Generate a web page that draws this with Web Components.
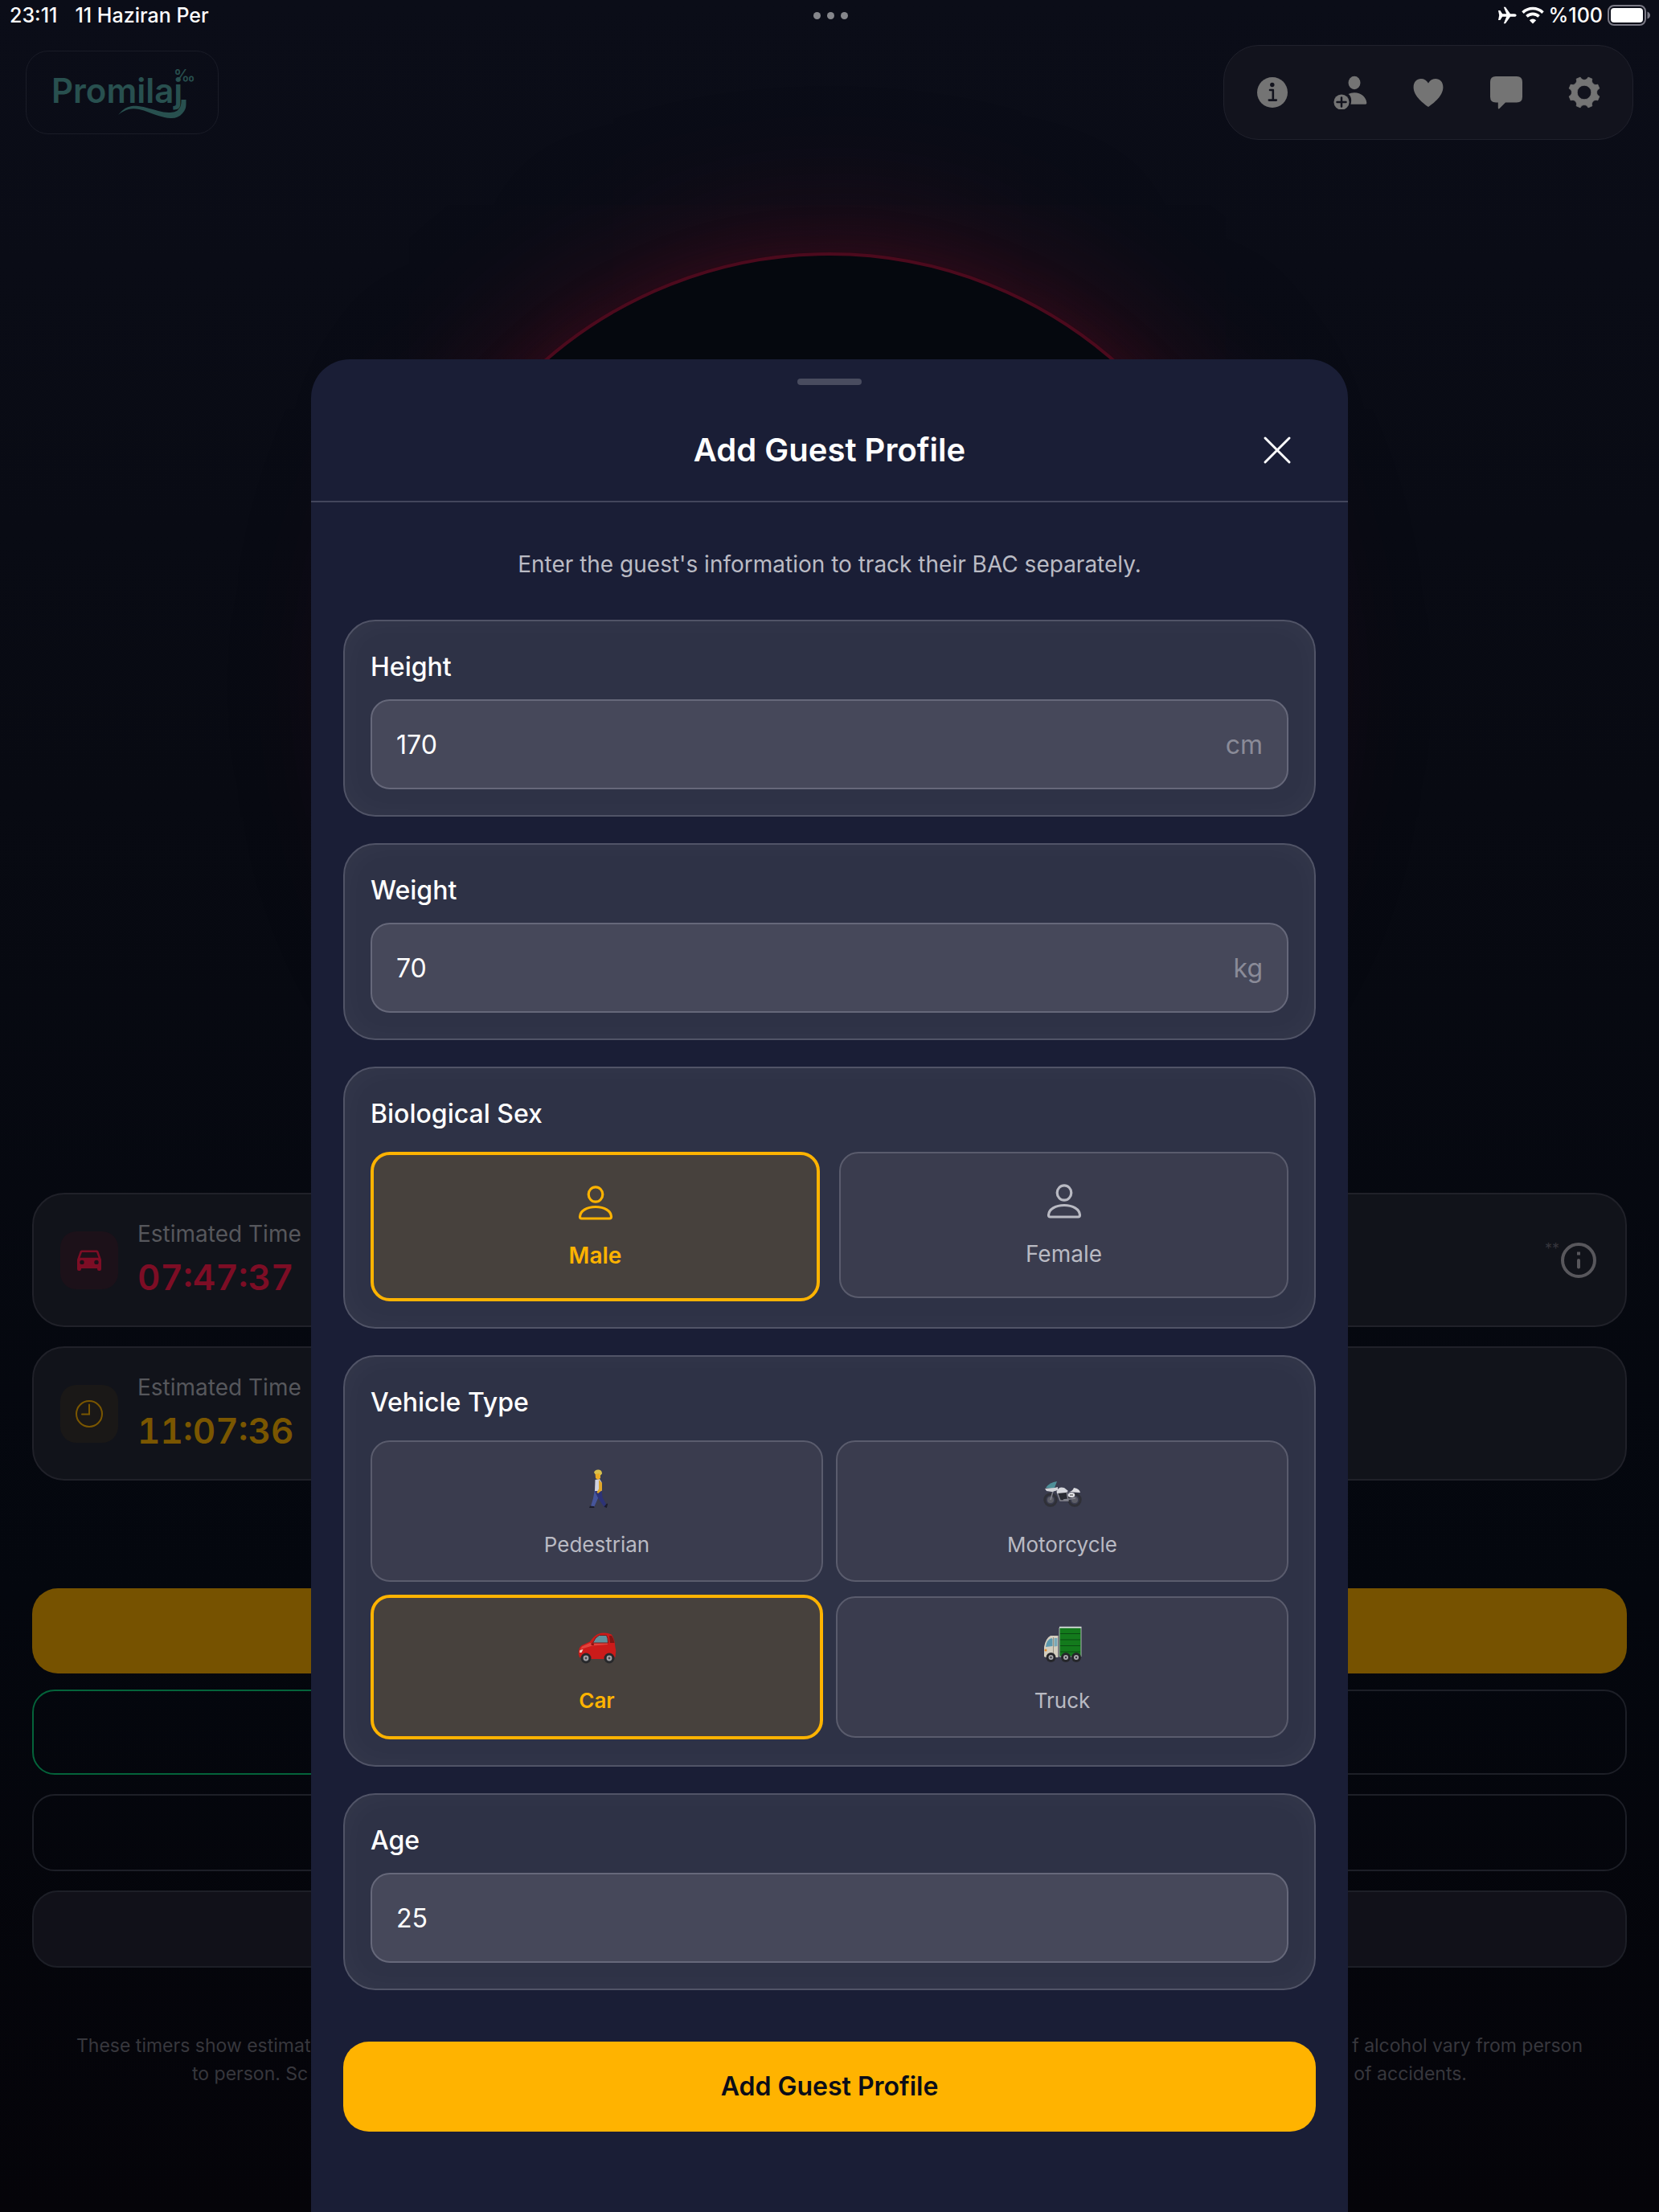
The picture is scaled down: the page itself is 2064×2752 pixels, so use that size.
<!DOCTYPE html>
<html lang="en">
<head>
<meta charset="utf-8">
<meta name="viewport" content="width=device-width, initial-scale=1">
<title>Promilaj</title>
<style>
    html, body {
        margin: 0;
        min-height: 100%;
    }

    body {
        min-height: 100vh;
        background: linear-gradient(#0b0d18 0, #080a12 36%, #04070e 72%, #050409 100%);
        color: white;
        font-family: Inter, "Liberation Sans", sans-serif;
        --amber: #ffb300;
    }
</style>
</head>
<body>
<promilaj-app></promilaj-app>

<script>
const icons = {
    plane: '<svg width="24" height="22" viewBox="0 0 24 22" fill="#fff"><path d="M1 5h2.400l2.800 4.200h5L7.800.8h2.200l6 8.400H21c1.600 0 2.700 1 2.700 1.800s-1.100 1.800-2.700 1.800h-5l-6 8.400H7.800l3.400-8.400h-5L3.400 17H1l1.200-6z"/></svg>',
    wifi: '<svg width="28" height="22" viewBox="0 0 28 22" fill="none" stroke="#fff" stroke-width="3.600"><path d="M1.500 7.600a18 18 0 0 1 25 0"/><path d="M6.400 12.400a11 11 0 0 1 15.200 0"/><path d="M14 21.500l-4.200-4.300a6 6 0 0 1 8.400 0z" fill="#fff" stroke="none"/></svg>',
    battery: '<svg width="54" height="26" viewBox="0 0 54 26"><rect x="1" y="1" width="46" height="24" rx="7" fill="none" stroke="#7b7a86" stroke-width="2"/><rect x="4" y="4" width="40" height="18" rx="4" fill="#fff"/><path d="M49.500 8.500q3.500 1.500 3.500 4.500t-3.500 4.500z" fill="#7b7a86"/></svg>',
    info: '<svg width="40" height="40" viewBox="0 0 40 40"><circle cx="20" cy="20" r="19" fill="#747474"/><circle cx="19.800" cy="10.500" r="2.700" fill="#12131d"/><path d="M17 17h3.800v12.300M15.800 29.600h9" fill="none" stroke="#12131d" stroke-width="2.600" stroke-linecap="round" stroke-linejoin="round"/></svg>',
    addUser: '<svg width="42" height="42" viewBox="0 0 42 42"><ellipse cx="26" cy="9" rx="7.500" ry="8.300" fill="#747474"/><path d="M18.500 23q3-1.700 7.500-1.700c8.500 0 15 6 15.300 12.700 0 1-.5 1.700-1.500 1.700H21.500c1.500-5.500.5-10-3-12.700z" fill="#747474"/><circle cx="10" cy="33" r="9.600" fill="#747474"/><path d="M10 27.500v11M4.500 33h11" stroke="#12131d" stroke-width="2.500" stroke-linecap="round"/></svg>',
    heart: '<svg width="40" height="40" viewBox="0 0 40 40"><path d="M20 38C15 34.500 1.600 25 1.600 13.500 1.600 6.500 6 3 10.800 3 15 3 18 5 20 8.500 22 5 25 3 29.200 3 34 3 38.400 6.500 38.400 13.500 38.400 25 25 34.500 20 38z" fill="#747474"/></svg>',
    chat: '<svg width="42" height="42" viewBox="0 0 42 42"><path d="M8 1h26q7 0 7 7v18.500q0 7-7 7H20L12.500 41q-1.700 1.300-1.700-.8v-6.700H8q-7 0-7-7V8q0-7 7-7z" fill="#747474"/></svg>',
    gear: '<svg width="40" height="40" viewBox="0 0 40 40"><path fill="#747474" stroke="#747474" stroke-width=".8" stroke-linejoin="round" fill-rule="evenodd" d="M15.100 1.100C17 5.500 23 5.500 24.900 1.100L29.900 3.200C28.100 7.600 32.400 11.900 36.800 10.100L38.900 15.100C34.500 17 34.500 23 38.900 24.900L36.800 29.900C32.400 28.100 28.100 32.400 29.900 36.800L24.900 38.900C23 34.500 17 34.500 15.100 38.900L10.100 36.800C11.900 32.400 7.600 28.100 3.200 29.900L1.100 24.900C5.500 23 5.500 17 1.100 15.100L3.200 10.100C7.600 11.900 11.900 7.600 10.100 3.200zM20 11.200a8.800 8.800 0 1 0 0 17.600 8.800 8.800 0 1 0 0-17.600z"/></svg>',
    carFront: '<svg width="32" height="28" viewBox="0 0 32 28"><path fill="#7d0d25" fill-rule="evenodd" d="M6.500 1.500h19q1.500 0 2 1.500L31 13v12q0 2-2 2h-1q-2 0-2-2v-1H6v1q0 2-2 2H3q-2 0-2-2V13L4.500 3q.5-1.500 2-1.500zM7 4L4.500 10.800h23L25 4zM7 13.700a2.700 2.700 0 1 0 0 5.400 2.700 2.700 0 1 0 0-5.400zm18 0a2.700 2.700 0 1 0 0 5.400 2.700 2.700 0 1 0 0-5.400z"/></svg>',
    clock: '<svg width="36" height="36" viewBox="0 0 36 36" fill="none" stroke="#7a5600" stroke-width="2"><circle cx="18" cy="18" r="16"/><path d="M18 6.500v12H9" stroke-linecap="round"/></svg>',
    infoOutline: '<svg width="48" height="48" viewBox="0 0 48 48" fill="none" stroke="#58575c" stroke-width="4"><circle cx="24" cy="24" r="20"/><path d="M24 24v8.500" stroke-linecap="round"/><path d="M24 13.500v4"/></svg>',
    close: '<svg width="56" height="56" viewBox="0 0 56 56"><path d="M13 13l30 30M43 13L13 43" stroke="#fff" stroke-width="3" stroke-linecap="round"/></svg>',
    person: '<svg width="56" height="56" viewBox="0 0 56 56" fill="none" stroke="currentColor" stroke-width="3.200"><ellipse cx="28" cy="17" rx="8.800" ry="9.200"/><path d="M10.500 47q-2 0-2-2.500C9 37.500 17 32.500 28 32.500s19 5 19.500 12q0 2.500-2 2.500z"/></svg>',
    walk: '<svg width="48" height="48" viewBox="0 0 48 48"><path d="M21 25l-2 11-3 10h4.500l4.500-10 3-10z" fill="#46559a"/><path d="M22 25l7.500 1 1 9 5.500 10-3 2.500-7.500-11-4-8z" fill="#2d3377"/><path d="M15 45.500l5 .5.500 2H14zM32.500 46.500l3.500-4 1.200.5-1.400 5z" fill="#1c1d2c"/><path d="M21.500 13l5.500-1 2.500 4v11h-8.500z" fill="#cfd2e0"/><path d="M26 13l4 4v9l-5 4-1.500-1.500 2.500-4z" fill="#dfa628"/><path d="M21.500 5H28v6l-3 2-3-2z" fill="#e8ab25"/><path d="M20 4q1-4 6-3.500 4 .500 4 5L27.500 8l-1-3-5 1z" fill="#d8c04c"/></svg>',
    motorcycle: '<svg width="48" height="48" viewBox="0 0 48 48"><g fill="none" stroke="#2f3037" stroke-width="3"><circle cx="9" cy="38" r="7.200"/><circle cx="39" cy="38" r="7.200"/></g><g fill="#5c5d66"><circle cx="9" cy="38" r="4"/><circle cx="39" cy="38" r="4"/></g><path d="M9 38l4-14M17 28l4 11h10l-2-12zM25 38l15-2" fill="#292b32" stroke="#82838d" stroke-width="1.500"/><path d="M17 27q2-6 9-4l5 4-3 2-11 1z" fill="#d5d6dc"/><path d="M29 28q7 1 9-5 7 1 8 6z" fill="#dcdce0"/><path d="M3 23q5-7 14-8l-3 8-3 1z" fill="#4e8f98"/><path d="M2 24l12-1 4-1v4l-7 2-7-1z" fill="#d2d3d8"/><ellipse cx="35" cy="32" rx="4.300" ry="3" fill="#e2e2e6"/><path d="M33 32h4" stroke="#555" stroke-width="1.200"/></svg>',
    car: '<svg width="48" height="48" viewBox="0 0 48 48"><path d="M.8 36q-.5-8 4-11l10-4.500q5-7 10-9.500 9-3 17 .5 4 5 4.700 16l.8 4-.8 8-3.500 2.500H7l-5-2z" fill="#cb1b1a"/><path d="M5 26.500l10-4.500h22v2L18 25.500 3 30z" fill="#e2433c"/><path d="M18.500 22q3-7.500 8-9.500h9q2 3 2 9.500z" fill="#5e919d" stroke="#7d1714" stroke-width="1"/><path d="M39 13h3q3 4 3.500 9H40z" fill="#7f1513"/><path d="M16 22.500l3.500-.5.500 3h-3z" fill="#8c1211"/><path d="M2.500 31l4-1-2 4H2z" fill="#f1d9c9"/><g fill="#27282b"><circle cx="10" cy="41" r="6.500"/><circle cx="39" cy="41" r="6.500"/></g><g fill="#a2a2a6"><circle cx="10" cy="41" r="3.400"/><circle cx="39" cy="41" r="3.400"/></g><g fill="#4a4a4e"><circle cx="10" cy="41" r="1.400"/><circle cx="39" cy="41" r="1.400"/></g></svg>',
    truck: '<svg width="48" height="48" viewBox="0 0 48 48"><path d="M20 3h27v36H20z" fill="#137a1c" stroke="#a8b2ad" stroke-width="1"/><path d="M21 10.500h25M21 18h25M21 25.500h25M21 33h25" stroke="#0a4a12" stroke-width="1.200"/><path d="M20 2.500h27.500" stroke="#dfe4e2" stroke-width="1.500"/><path d="M1 39V27q2-11 8-14h9.500v27H3z" fill="#d3cebf"/><path d="M3 27q1-9 7-11l1.500 1v9z" fill="#5b98ae"/><path d="M13.500 16h4v10l-4 .5z" fill="#79a9b8"/><path d="M12.500 15v24" stroke="#948f82"/><circle cx="3" cy="31" r="1.500" fill="#e08b2a"/><g fill="#25262a"><circle cx="9.500" cy="40" r="6"/><circle cx="28" cy="40" r="6"/><circle cx="41" cy="40" r="6"/></g><g fill="#a9a9ae"><circle cx="9.500" cy="40" r="3"/><circle cx="28" cy="40" r="3"/><circle cx="41" cy="40" r="3"/></g><g fill="#3d3d42"><circle cx="9.500" cy="40" r="1.200"/><circle cx="28" cy="40" r="1.200"/><circle cx="41" cy="40" r="1.200"/></g></svg>',
    logo: '<svg width="182" height="74" viewBox="0 0 182 74" fill="#28504f" role="img" aria-label="Promilaj"><text x="3" y="50" font-size="42" font-weight="600">Promilaj</text><text x="155" y="23" font-size="20" font-weight="500">‰</text><path d="M86 65C91 59 95 56 99 55C103 53.500 107 53.500 111 54C120 55 128 58 136 60C140 61 145 62 149 62C154 62 159 61 161 58C164 55 164.500 52 164.500 46H170.500V51C170.500 56 169.500 59 166 63C162 67.500 157 69.500 151 69C146 69 141 67.500 136 66C128 63.500 120 59.500 112 58C107 57 103 57 99 58C95 59 91 61 86 65z"/></svg>',
};

class BaseElement extends HTMLElement {
    constructor() {
        super();
        this.attachShadow({ mode: 'open' });
    }

    connectedCallback() {
        this.shadowRoot.innerHTML = this.render();
    }
}

class StatusBar extends BaseElement {
    render() {
        return `
        <style>
            :host {
                display: grid;
                grid-template-columns: 1fr auto 1fr;
                align-items: center;
                height: 38px;
                padding: 0 10px 0 12px;
                font-size: 25px;
                font-weight: 500;
            }
            .left { display: flex; gap: 22px; }
            .dots { display: flex; gap: 8px; }
            .dots i {
                width: 9px;
                height: 9px;
                border-radius: 50%;
                background: #85868b;
            }
            .right {
                display: flex;
                justify-content: flex-end;
                align-items: center;
                gap: 6px;
            }
            svg { display: block; }
        </style>
        <div class="left"><span>23:11</span><span>11 Haziran Per</span></div>
        <div class="dots"><i></i><i></i><i></i></div>
        <div class="right">${icons.plane}${icons.wifi}<span>%100</span>${icons.battery}</div>`;
    }
}
customElements.define('status-bar', StatusBar);

class TopBar extends BaseElement {
    render() {
        const buttons = [
            ['info', 'About'],
            ['addUser', 'Add guest'],
            ['heart', 'Favourites'],
            ['chat', 'Feedback'],
            ['gear', 'Settings'],
        ];
        return `
        <style>
            :host {
                display: flex;
                justify-content: space-between;
                align-items: center;
                padding: 18px 32px 0;
            }
            .logo {
                padding: 14px 28px;
                border: 1px solid #1a1c27;
                border-radius: 28px;
            }
            .tools {
                display: flex;
                gap: 1px;
                padding: 10px 12px;
                border: 1px solid #20212c;
                border-radius: 44px;
                background: #12131d;
            }
            button {
                display: flex;
                align-items: center;
                justify-content: center;
                width: 96px;
                height: 96px;
                padding: 0;
                border: 0;
                background: none;
            }
            svg { display: block; }
        </style>
        <div class="logo">${icons.logo}</div>
        <div class="tools">
            ${buttons.map(([icon, label]) => `<button aria-label="${label}">${icons[icon]}</button>`).join('')}
        </div>`;
    }
}
customElements.define('top-bar', TopBar);

class BacGauge extends BaseElement {
    render() {
        return `
        <style>
            :host {
                display: flex;
                justify-content: center;
                padding: 140px 0 90px;
            }
            .ring {
                box-sizing: border-box;
                width: 1080px;
                height: 1080px;
                border: 4px solid #4c0a1d;
                border-radius: 50%;
                background: #05080e;
                box-shadow: 0 0 60px rgba(90, 12, 30, .2), 0 0 160px 20px rgba(90, 12, 30, .5);
            }
        </style>
        <div class="ring"></div>`;
    }
}
customElements.define('bac-gauge', BacGauge);

class TimerCard extends BaseElement {
    render() {
        return `
        <style>
            :host {
                display: flex;
                align-items: center;
                gap: 24px;
                box-sizing: border-box;
                height: 167px;
                padding: 0 34px 0 33px;
                border: 2px solid #202129;
                border-radius: 40px;
                background: #11131a;
            }
            .icon {
                display: flex;
                align-items: center;
                justify-content: center;
                width: 72px;
                height: 72px;
                border-radius: 20px;
                background: #1c1119;
            }
            :host([tone=amber]) .icon { background: #1a1817; }
            .text { flex: 1; }
            .title {
                font-size: 28px;
                line-height: 42px;
                color: #56575c;
            }
            .time {
                font-size: 44px;
                line-height: 66px;
                font-weight: 600;
                font-variant-numeric: tabular-nums;
                color: #7d0d25;
            }
            :host([tone=amber]) .time { color: #7a5600; }
            svg { display: block; }
        </style>
        <div class="icon">${icons[this.getAttribute('icon')]}</div>
        <div class="text">
            <div class="title">${this.getAttribute('label')}</div>
            <div class="time">${this.getAttribute('time')}</div>
        </div>
        <slot></slot>`;
    }
}
customElements.define('timer-card', TimerCard);

class InfoNote extends BaseElement {
    render() {
        return `
        <style>
            :host { display: flex; }
            span {
                font-size: 18px;
                line-height: 20px;
                color: #35353c;
            }
            button {
                padding: 0;
                border: 0;
                background: none;
            }
            svg { display: block; }
        </style>
        <span>**</span>
        <button aria-label="More about this timer">${icons.infoOutline}</button>`;
    }
}
customElements.define('info-note', InfoNote);

class HomeActions extends BaseElement {
    render() {
        return `
        <style>
            :host {
                display: flex;
                flex-direction: column;
                gap: 24px;
            }
            .main {
                display: grid;
                grid-template-columns: 1fr 1fr;
                gap: 20px;
            }
            button {
                height: 96px;
                border: 2px solid #1d1f27;
                border-radius: 28px;
                background: none;
            }
            .main button { height: 106px; }
            .main .add {
                grid-column: span 2;
                border: 0;
                border-radius: 32px;
                background: #765200;
            }
            .main .water { border-color: #04633a; }
            .filled {
                border-radius: 32px;
                background: #111119;
            }
        </style>
        <div class="main">
            <button class="add" aria-label="Add drink"></button>
            <button class="water" aria-label="Water"></button>
            <button aria-label="Food"></button>
        </div>
        <button aria-label="History"></button>
        <button class="filled" aria-label="Reset"></button>`;
    }
}
customElements.define('home-actions', HomeActions);

class HomeNote extends BaseElement {
    render() {
        return `
        <style>
            :host {
                display: block;
                font-size: 23px;
                line-height: 35px;
                color: #37373d;
            }
            div {
                display: flex;
                justify-content: space-between;
                padding: 0 55px;
            }
            div + div { padding: 0 199px; }
        </style>
        <div><span>These timers show estimat</span><span>f alcohol vary from person</span></div>
        <div><span>to person. Sc</span><span>of accidents.</span></div>`;
    }
}
customElements.define('home-note', HomeNote);

class FormCard extends BaseElement {
    render() {
        return `
        <style>
            :host {
                display: block;
                padding: 32px;
                border: 2px solid #515467;
                border-radius: 40px;
                background: #2e3246;
                box-shadow: inset 0 0 40px rgba(255, 255, 255, .03);
            }
        </style>
        <slot></slot>`;
    }
}
customElements.define('form-card', FormCard);

class NumberField extends BaseElement {
    render() {
        return `
        <style>
            :host { display: block; }
            label {
                display: block;
                margin-bottom: 16px;
                font-size: 32px;
                line-height: 49px;
                font-weight: 500;
            }
            .box {
                display: flex;
                align-items: center;
                box-sizing: border-box;
                height: 112px;
                padding: 0 30px;
                border: 2px solid #66687a;
                border-radius: 24px;
                background: #46485a;
                font-size: 32px;
            }
            input {
                flex: 1;
                min-width: 0;
                padding: 0;
                border: 0;
                outline: 0;
                background: none;
                color: white;
                font: inherit;
            }
            span { color: #8a8b98; }
        </style>
        <form-card>
            <label for="value">${this.getAttribute('label')}</label>
            <div class="box">
                <input id="value" inputmode="numeric" value="${this.getAttribute('value')}">
                <span>${this.getAttribute('unit') || ''}</span>
            </div>
        </form-card>`;
    }
}
customElements.define('number-field', NumberField);

class ChoiceField extends BaseElement {
    render() {
        const name = this.getAttribute('name');
        const selected = this.getAttribute('selected');
        const options = this.getAttribute('options').split(',').map((item) => item.split(':'));

        return `
        <style>
            :host { display: block; }
            fieldset {
                margin: 0;
                padding: 0;
                border: 0;
            }
            legend {
                margin-bottom: 23px;
                padding: 0;
                font-size: 32px;
                line-height: 49px;
                font-weight: 500;
            }
            .options {
                display: grid;
                grid-template-columns: 1fr 1fr;
                gap: 24px;
                align-items: start;
            }
            label {
                display: flex;
                flex-direction: column;
                align-items: center;
                gap: 16px;
                padding: 32px;
                border: 2px solid #5a5c6d;
                border-radius: 24px;
                background: #3a3c4e;
                color: #b9bac3;
                font-size: 28px;
                line-height: 42px;
            }
            label:has(:checked) {
                border: 4px solid var(--amber);
                background: #47413d;
                color: var(--amber);
                font-weight: 600;
            }
            input {
                position: absolute;
                opacity: 0;
            }
            svg { display: block; }

            :host([compact]) .options {
                gap: 16px;
                align-items: center;
            }
            :host([compact]) label {
                padding: 24px;
                font-size: 26px;
                line-height: 40px;
            }
            :host([compact]) svg { padding: 10px 0; }
        </style>
        <form-card>
            <fieldset>
                <legend>${this.getAttribute('label')}</legend>
                <div class="options">
                    ${options.map(([text, icon]) => `
                    <label>
                        <input type="radio" name="${name}" ${text === selected ? 'checked' : ''}>
                        ${icons[icon]}
                        <span>${text}</span>
                    </label>`).join('')}
                </div>
            </fieldset>
        </form-card>`;
    }
}
customElements.define('choice-field', ChoiceField);

class BottomSheet extends BaseElement {
    render() {
        return `
        <style>
            :host {
                position: fixed;
                inset: 0;
                display: flex;
                flex-direction: column;
                justify-content: flex-end;
                align-items: center;
            }
            .sheet {
                width: 100%;
                max-width: 1290px;
                border-radius: 48px 48px 0 0;
                background: #1a1e36;
            }
            .handle {
                width: 80px;
                height: 8px;
                margin: 0 auto;
                border-radius: 4px;
                background: #494c5f;
            }
            header {
                padding: 24px 40px 15px;
                border-bottom: 2px solid #43465c;
            }
            .row {
                display: grid;
                grid-template-columns: 96px 1fr 96px;
                align-items: center;
                padding-top: 33px;
            }
            h1 {
                grid-column: 2;
                margin: 0;
                font-size: 40px;
                line-height: 60px;
                font-weight: 600;
                text-align: center;
            }
            button {
                display: flex;
                align-items: center;
                justify-content: center;
                height: 96px;
                padding: 0;
                border: 0;
                background: none;
            }
            svg { display: block; }
            main { padding: 56px 40px 100px; }
        </style>
        <section class="sheet" role="dialog">
            <header>
                <div class="handle"></div>
                <div class="row">
                    <h1>${this.getAttribute('heading')}</h1>
                    <button aria-label="Close">${icons.close}</button>
                </div>
            </header>
            <main><slot></slot></main>
        </section>`;
    }
}
customElements.define('bottom-sheet', BottomSheet);

class GuestForm extends BaseElement {
    render() {
        return `
        <style>
            :host { display: block; }
            p {
                margin: 0 0 48px;
                font-size: 28px;
                line-height: 42px;
                text-align: center;
                color: #babbc4;
            }
            .fields {
                display: flex;
                flex-direction: column;
                gap: 33px;
                margin-bottom: 64px;
            }
            button {
                display: block;
                width: 100%;
                height: 112px;
                border: 0;
                border-radius: 32px;
                background: var(--amber);
                color: #0b0d18;
                font: 600 32px/48px Inter, "Liberation Sans", sans-serif;
            }
        </style>
        <p>Enter the guest's information to track their BAC separately.</p>
        <div class="fields">
            <number-field label="Height" value="170" unit="cm"></number-field>
            <number-field label="Weight" value="70" unit="kg"></number-field>
            <choice-field label="Biological Sex" name="sex" selected="Male"
                options="Male:person,Female:person"></choice-field>
            <choice-field compact label="Vehicle Type" name="vehicle" selected="Car"
                options="Pedestrian:walk,Motorcycle:motorcycle,Car:car,Truck:truck"></choice-field>
            <number-field label="Age" value="25"></number-field>
        </div>
        <button>Add Guest Profile</button>`;
    }
}
customElements.define('guest-form', GuestForm);

class PromilajApp extends BaseElement {
    render() {
        return `
        <style>
            :host {
                display: block;
                overflow: hidden;
            }
            .content { padding: 0 40px; }
            .timers {
                display: flex;
                flex-direction: column;
                gap: 24px;
            }
            home-actions { padding: 134px 0 80px; }
        </style>
        <status-bar></status-bar>
        <top-bar></top-bar>
        <div class="content">
            <bac-gauge></bac-gauge>
            <div class="timers">
                <timer-card icon="carFront" label="Estimated Time" time="07:47:37"><info-note></info-note></timer-card>
                <timer-card icon="clock" tone="amber" label="Estimated Time" time="11:07:36"></timer-card>
            </div>
            <home-actions></home-actions>
            <home-note></home-note>
        </div>
        <bottom-sheet heading="Add Guest Profile">
            <guest-form></guest-form>
        </bottom-sheet>`;
    }
}
customElements.define('promilaj-app', PromilajApp);
</script>
</body>
</html>
